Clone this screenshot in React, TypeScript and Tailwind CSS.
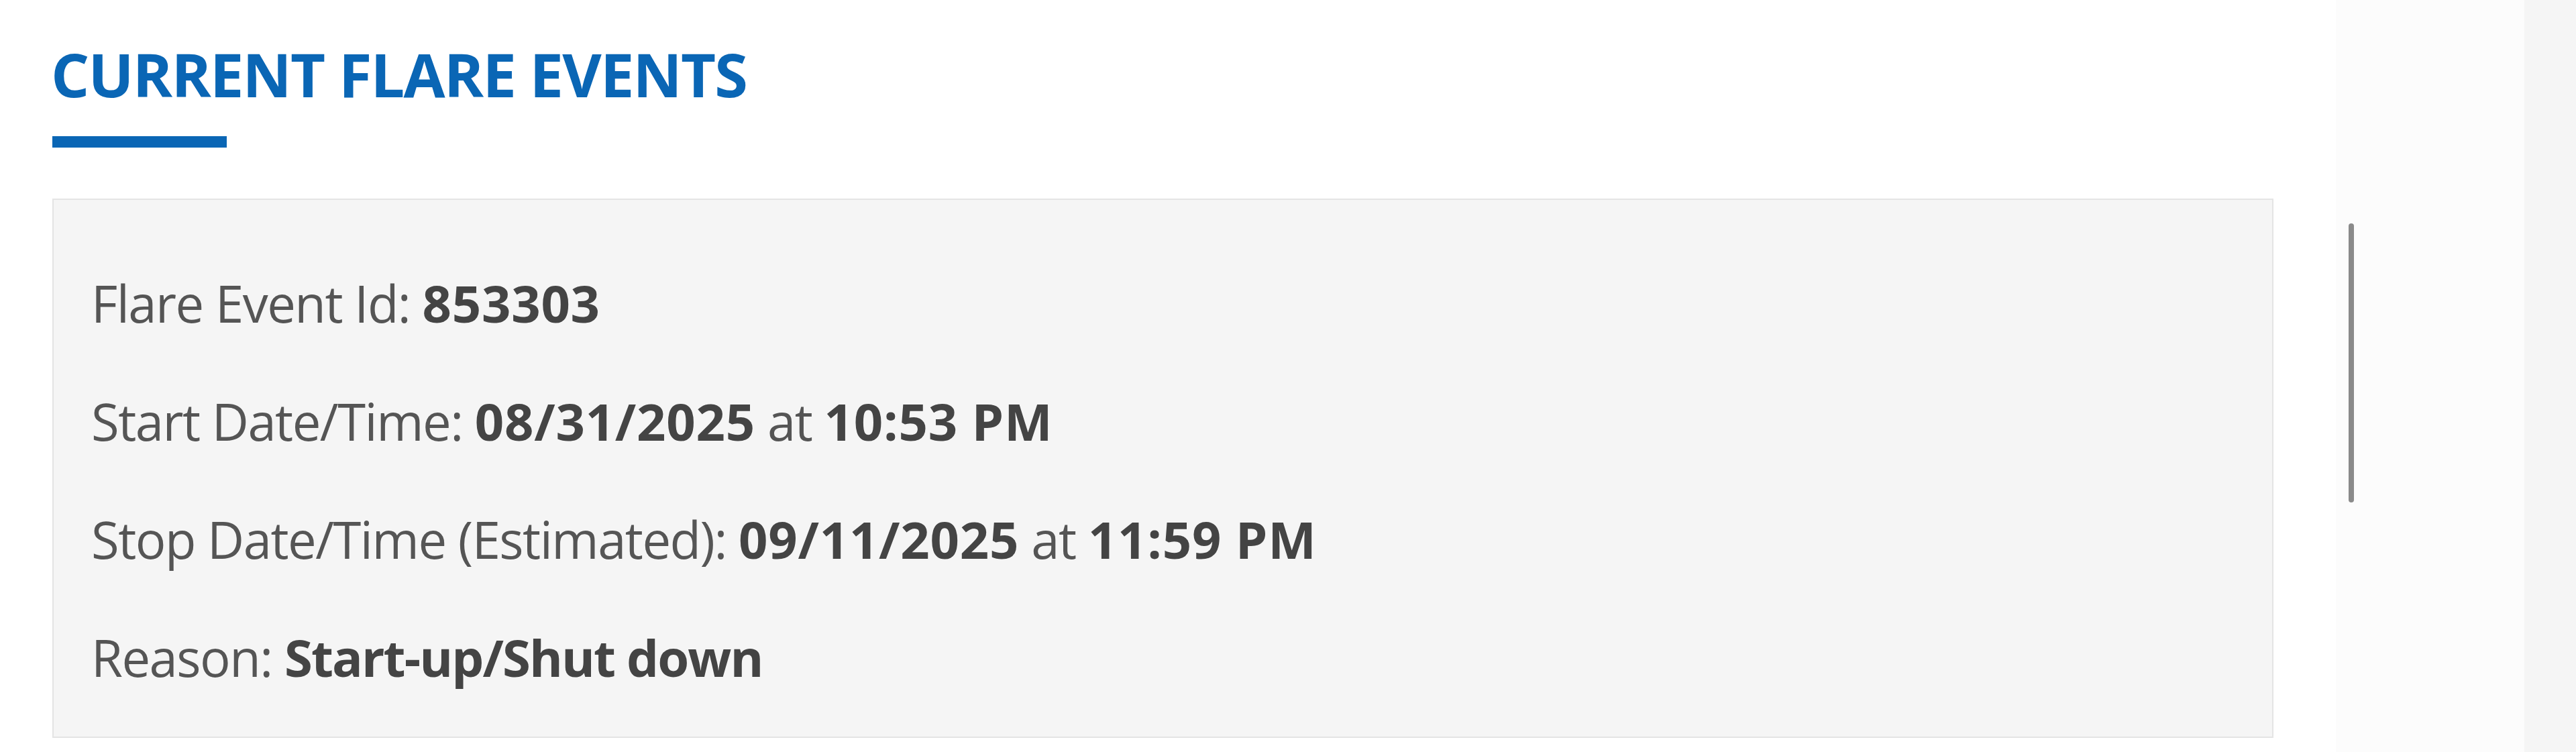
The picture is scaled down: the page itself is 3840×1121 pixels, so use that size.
const rows: { label: string; parts: { text: string; bold?: boolean; num?: boolean }[] }[] = [
  { label: "Flare Event Id: ", parts: [{ text: "853303", bold: true, num: true }] },
  {
    label: "Start Date/Time: ",
    parts: [
      { text: "08/31/2025", bold: true, num: true },
      { text: " at " },
      { text: "10:53 PM", bold: true, num: true },
    ],
  },
  {
    label: "Stop Date/Time (Estimated): ",
    parts: [
      { text: "09/11/2025", bold: true, num: true },
      { text: " at " },
      { text: "11:59 PM", bold: true, num: true },
    ],
  },
  { label: "Reason: ", parts: [{ text: "Start-up/Shut down", bold: true }] },
];

export default function App() {
  return (
    <div className="flex h-[1121px] w-full bg-white font-['Open_Sans',sans-serif]">
      {/* main column */}
      <div className="flex-1 flex flex-col pl-[78px] pr-[93px] pt-[65px]">
        <h2 className="-ml-[2px] text-[90px] leading-none font-bold tracking-[-0.02em] text-[#0a66b5]">
          CURRENT FLARE EVENTS
        </h2>
        <div className="mt-[48px] h-[17px] w-[260px] bg-[#0a66b5]" />

        <div className="mt-[76px] flex-1 mb-[21px] border-2 border-[#e4e4e4] bg-[#f5f5f5] pl-[56px] pt-[116px]">
          <div className="flex flex-col gap-[100px]">
            {rows.map((row, i) => (
              <p key={i} className="text-[76px] leading-none tracking-[-0.02em] text-[#555555] whitespace-nowrap">
                {row.label}
                {row.parts.map((p, j) =>
                  p.bold ? (
                    <span
                      key={j}
                      className={
                        p.num
                          ? "font-bold tracking-[0.01em] text-[#444444]"
                          : "font-bold tracking-[-0.025em] text-[#444444]"
                      }
                    >
                      {p.text}
                    </span>
                  ) : (
                    <span key={j}>{p.text}</span>
                  )
                )}
              </p>
            ))}
          </div>
        </div>
      </div>

      {/* side strip with scroll thumb */}
      <div className="w-[281px] bg-[#fcfcfc] pl-[19px] pt-[333px]">
        <div className="h-[416px] w-[8px] rounded-full bg-[#8a8a8a]" />
      </div>
      <div className="w-[77px] bg-[#f5f5f5]" />
    </div>
  );
}
